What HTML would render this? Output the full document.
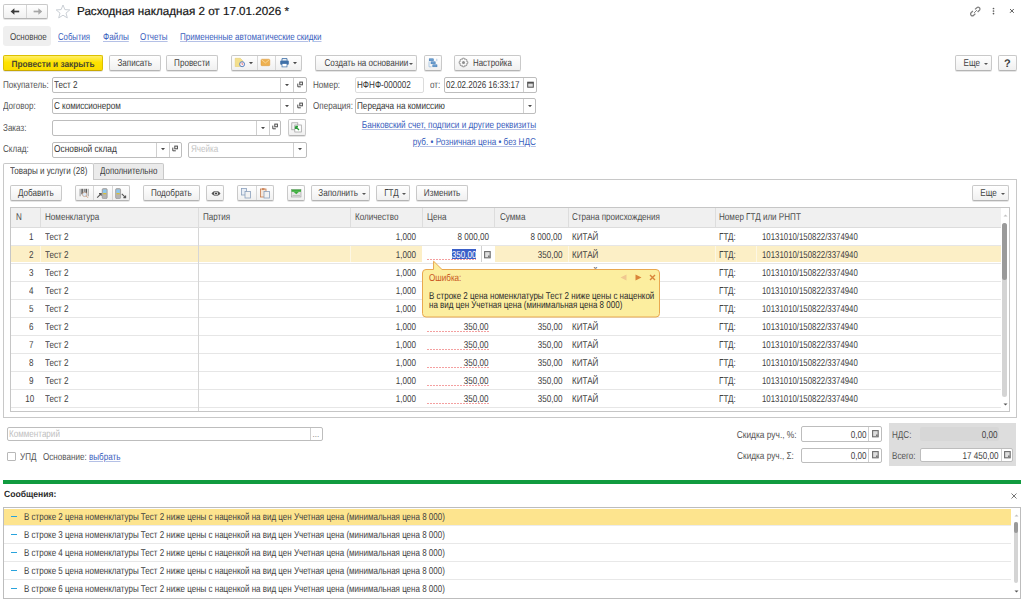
<!DOCTYPE html><html><head><meta charset="utf-8"><style>
html,body{margin:0;padding:0;width:1024px;height:603px;overflow:hidden;background:#fff;font-family:"Liberation Sans",sans-serif;text-rendering:geometricPrecision}
div{box-sizing:border-box}
.lnk{color:#3d5fae;text-decoration:underline;text-decoration-color:#8fa3d4}
</style></head><body>
<div style="position:absolute;left:3px;top:4px;width:45px;height:15px;background:linear-gradient(#ffffff,#f0f0f0);border:1px solid #c9c9c9;border-bottom-color:#b4b4b4;border-radius:2px;box-shadow:0 1px 0 rgba(0,0,0,0.10);box-sizing:border-box;"></div>
<div style="position:absolute;left:26px;top:5px;width:1px;height:13px;background:#d4d4d4"></div>
<svg style="position:absolute;left:10px;top:7px" width="10" height="9" viewBox="0 0 10 9"><path d="M2.5 4.5H9.2" stroke="#3a3a3a" stroke-width="1.7"/><path d="M0.6 4.5L4.4 1.2V7.8Z" fill="#3a3a3a"/></svg>
<svg style="position:absolute;left:32.5px;top:7px" width="10" height="9" viewBox="0 0 10 9"><path d="M0.6 4.5H7.3" stroke="#a6a6a6" stroke-width="1.7"/><path d="M9.2 4.5L5.4 1.2V7.8Z" fill="#a6a6a6"/></svg>
<svg style="position:absolute;left:55px;top:4px" width="16" height="15" viewBox="0 0 16 15"><path d="M8 1L9.9 5.6L14.8 5.9L11 9.1L12.3 13.9L8 11.2L3.7 13.9L5 9.1L1.2 5.9L6.1 5.6Z" fill="none" stroke="#c4c9d0" stroke-width="0.9"/></svg>
<div style="position:absolute;left:77px;top:5.26px;font-size:11.65px;line-height:14px;color:#151515;white-space:pre;-webkit-text-stroke:0.2px #151515">Расходная накладная 2 от 17.01.2026 *</div>
<svg style="position:absolute;left:969.5px;top:5.5px" width="11" height="11" viewBox="0 0 11 11"><g fill="none" stroke="#808080" stroke-width="1.25"><path d="M5 3.4L6.8 1.7a1.8 1.8 0 0 1 2.6 2.6L7.6 6"/><path d="M5.4 7.6L3.7 9.3a1.8 1.8 0 0 1 -2.6 -2.6L2.9 5"/><path d="M4.1 6.9L6.9 4.1" stroke-width="1"/></g></svg>
<svg style="position:absolute;left:991.5px;top:6.5px" width="3" height="8" viewBox="0 0 3 8"><g fill="#5a5a5a"><circle cx="1.5" cy="1.5" r="0.85"/><circle cx="1.5" cy="4" r="0.85"/><circle cx="1.5" cy="6.6" r="0.85"/></g></svg>
<svg style="position:absolute;left:1009px;top:8px" width="6" height="6" viewBox="0 0 6 6"><path d="M1 1L4.8 4.8M4.8 1L1 4.8" stroke="#5a5a5a" stroke-width="1"/></svg>
<div style="position:absolute;left:3px;top:25.5px;width:48px;height:20.5px;background:#efefef;border-radius:3px"></div>
<div style="position:absolute;left:9.5px;top:31.74px;font-size:10px;line-height:12px;color:#444;white-space:pre;transform:scaleX(0.8031920335572758);transform-origin:left center;">Основное</div>
<div style="position:absolute;left:58.3px;top:31.74px;font-size:10px;line-height:12px;color:#3a60bd;white-space:pre;transform:scaleX(0.7751996669063931);transform-origin:left center;text-decoration:underline;text-decoration-color:#b4c0e6;text-underline-offset:0.5px">События</div>
<div style="position:absolute;left:102.8px;top:31.74px;font-size:10px;line-height:12px;color:#3a60bd;white-space:pre;transform:scaleX(0.8120389495426379);transform-origin:left center;text-decoration:underline;text-decoration-color:#b4c0e6;text-underline-offset:0.5px">Файлы</div>
<div style="position:absolute;left:140.4px;top:31.74px;font-size:10px;line-height:12px;color:#3a60bd;white-space:pre;transform:scaleX(0.7985172460557842);transform-origin:left center;text-decoration:underline;text-decoration-color:#b4c0e6;text-underline-offset:0.5px">Отчеты</div>
<div style="position:absolute;left:179.5px;top:31.74px;font-size:10px;line-height:12px;color:#3a60bd;white-space:pre;transform:scaleX(0.8025522864232542);transform-origin:left center;text-decoration:underline;text-decoration-color:#b4c0e6;text-underline-offset:0.5px">Примененные автоматические скидки</div>
<div style="position:absolute;left:3px;top:55px;width:100px;height:16px;background:linear-gradient(#ffee6a,#ffe300 45%,#fadc00);border:1px solid #dcc000;border-bottom-color:#c9a800;border-radius:2px;box-shadow:0 1px 0 rgba(0,0,0,0.10)"></div>
<div style="position:absolute;left:3px;width:100px;top:58.18px;font-size:9px;line-height:12px;color:#4a4830;text-align:center;white-space:pre;transform:scaleX(0.92);font-weight:bold;">Провести и закрыть</div>
<div style="position:absolute;left:109px;top:55px;width:51.5px;height:16px;background:linear-gradient(#ffffff,#f0f0f0);border:1px solid #c9c9c9;border-bottom-color:#b4b4b4;border-radius:2px;box-shadow:0 1px 0 rgba(0,0,0,0.10);box-sizing:border-box;"></div>
<div style="position:absolute;left:109px;width:51.5px;top:58.14px;font-size:10px;line-height:12px;color:#424242;text-align:center;white-space:pre;transform:scaleX(0.808);">Записать</div>
<div style="position:absolute;left:166px;top:55px;width:52px;height:16px;background:linear-gradient(#ffffff,#f0f0f0);border:1px solid #c9c9c9;border-bottom-color:#b4b4b4;border-radius:2px;box-shadow:0 1px 0 rgba(0,0,0,0.10);box-sizing:border-box;"></div>
<div style="position:absolute;left:166px;width:52px;top:58.14px;font-size:10px;line-height:12px;color:#424242;text-align:center;white-space:pre;transform:scaleX(0.808);">Провести</div>
<div style="position:absolute;left:231px;top:55px;width:70.5px;height:16px;background:linear-gradient(#ffffff,#f0f0f0);border:1px solid #c9c9c9;border-bottom-color:#b4b4b4;border-radius:2px;box-shadow:0 1px 0 rgba(0,0,0,0.10);box-sizing:border-box;"></div>
<div style="position:absolute;left:257px;top:56px;width:1px;height:14px;background:#d6d6d6"></div>
<div style="position:absolute;left:275px;top:56px;width:1px;height:14px;background:#d6d6d6"></div>
<svg style="position:absolute;left:234px;top:57px" width="12" height="11" viewBox="0 0 12 11"><path d="M1.2 1.3H6.3L8.8 3.8V9.5H1.2Z" fill="#f3df8c" stroke="#e2c86a" stroke-width="0.5"/><circle cx="8.1" cy="7.2" r="2.5" fill="#f8eef2" stroke="#4c7cc0" stroke-width="0.9"/><path d="M8.1 5.6V7.3H9.2" stroke="#d44" stroke-width="0.6" fill="none"/></svg>
<svg style="position:absolute;left:248.6px;top:62.4px" width="4" height="2.2" viewBox="0 0 4 2.2"><path d="M0 0H4L2.0 2.2Z" fill="#4a4a4a"/></svg>
<svg style="position:absolute;left:260px;top:58px" width="11" height="9" viewBox="0 0 11 9"><rect x="1" y="1.2" width="8.8" height="6.5" rx="0.8" fill="#eeb04e" stroke="#d9973a" stroke-width="0.5"/><path d="M1.3 1.6L5.4 4.9L9.5 1.6" stroke="#fbe2b0" stroke-width="0.7" fill="none"/></svg>
<svg style="position:absolute;left:279px;top:57px" width="11" height="11" viewBox="0 0 11 11"><path d="M3 3.6V1.6H8V3.6" fill="none" stroke="#3f70a8" stroke-width="0.9"/><rect x="1.2" y="3.6" width="8.6" height="4.2" rx="1" fill="#3f70a8"/><rect x="3" y="6.6" width="5" height="3.3" fill="#fff" stroke="#3f70a8" stroke-width="0.7"/></svg>
<svg style="position:absolute;left:293.2px;top:62.4px" width="4" height="2.2" viewBox="0 0 4 2.2"><path d="M0 0H4L2.0 2.2Z" fill="#4a4a4a"/></svg>
<div style="position:absolute;left:314.5px;top:55px;width:102.5px;height:16px;background:linear-gradient(#ffffff,#f0f0f0);border:1px solid #c9c9c9;border-bottom-color:#b4b4b4;border-radius:2px;box-shadow:0 1px 0 rgba(0,0,0,0.10);box-sizing:border-box;"></div>
<div style="position:absolute;left:314.5px;width:98.5px;top:58.14px;font-size:10px;line-height:12px;color:#424242;text-align:center;white-space:pre;transform:scaleX(0.808);">Создать на основании</div>
<svg style="position:absolute;left:409.0px;top:62.6px" width="4" height="2" viewBox="0 0 4 2"><path d="M0 0H4L2.0 2Z" fill="#555"/></svg>
<div style="position:absolute;left:423.5px;top:55px;width:18.0px;height:16px;background:linear-gradient(#ffffff,#f0f0f0);border:1px solid #c9c9c9;border-bottom-color:#b4b4b4;border-radius:2px;box-shadow:0 1px 0 rgba(0,0,0,0.10);box-sizing:border-box;"></div>
<svg style="position:absolute;left:427.5px;top:57.5px" width="10" height="10" viewBox="0 0 10 10"><g fill="#6a9fd0" stroke="#3f78b4" stroke-width="0.5"><rect x="1.2" y="0.8" width="4.2" height="2"/><rect x="3" y="3.8" width="4.2" height="2"/><rect x="4.8" y="6.8" width="4.2" height="2"/></g><path d="M1 3.5V8.8H3.5M8.8 0.8V3.2" stroke="#9dbfe0" stroke-width="0.8" fill="none"/></svg>
<div style="position:absolute;left:454px;top:55px;width:66.5px;height:16px;background:linear-gradient(#ffffff,#f0f0f0);border:1px solid #c9c9c9;border-bottom-color:#b4b4b4;border-radius:2px;box-shadow:0 1px 0 rgba(0,0,0,0.10);box-sizing:border-box;"></div>
<svg style="position:absolute;left:458.2px;top:56.7px" width="11" height="11" viewBox="0 0 11 11"><path d="M8.60 4.38 L9.82 4.68 L9.82 6.32 L8.60 6.62 L8.49 6.91 L9.14 7.97 L7.97 9.14 L6.91 8.49 L6.62 8.60 L6.32 9.82 L4.68 9.82 L4.38 8.60 L4.09 8.49 L3.03 9.14 L1.86 7.97 L2.51 6.91 L2.40 6.62 L1.18 6.32 L1.18 4.68 L2.40 4.38 L2.51 4.09 L1.86 3.03 L3.03 1.86 L4.09 2.51 L4.38 2.40 L4.68 1.18 L6.32 1.18 L6.62 2.40 L6.91 2.51 L7.97 1.86 L9.14 3.03 L8.49 4.09Z" fill="none" stroke="#8c8c8c" stroke-width="0.9"/><circle cx="5.5" cy="5.5" r="1.5" fill="#8c8c8c"/></svg>
<div style="position:absolute;left:473px;top:57.84px;font-size:10px;line-height:12px;color:#404040;white-space:pre;transform:scaleX(0.7881923504205681);transform-origin:left center;">Настройка</div>
<div style="position:absolute;left:954.5px;top:55px;width:37.5px;height:16px;background:linear-gradient(#ffffff,#f0f0f0);border:1px solid #c9c9c9;border-bottom-color:#b4b4b4;border-radius:2px;box-shadow:0 1px 0 rgba(0,0,0,0.10);box-sizing:border-box;"></div>
<div style="position:absolute;left:954.5px;width:33.5px;top:58.14px;font-size:10px;line-height:12px;color:#424242;text-align:center;white-space:pre;transform:scaleX(0.808);">Еще</div>
<svg style="position:absolute;left:984.0px;top:62.6px" width="4" height="2" viewBox="0 0 4 2"><path d="M0 0H4L2.0 2Z" fill="#555"/></svg>
<div style="position:absolute;left:998px;top:55px;width:18.5px;height:16px;background:linear-gradient(#ffffff,#f0f0f0);border:1px solid #c9c9c9;border-bottom-color:#b4b4b4;border-radius:2px;box-shadow:0 1px 0 rgba(0,0,0,0.10);box-sizing:border-box;"></div>
<div style="position:absolute;left:998px;width:18.5px;top:57.99px;font-size:11px;line-height:12px;color:#3a3a3a;text-align:center;white-space:pre;transform:scaleX(1);font-weight:bold;">?</div>
<div style="position:absolute;left:3px;top:79.73px;font-size:10px;line-height:12px;color:#545454;white-space:pre;transform:scaleX(0.808);transform-origin:left center;">Покупатель:</div>
<div style="position:absolute;left:51.5px;top:77px;width:255.0px;height:16px;background:#fff;border:1px solid #bdbdbd;border-radius:2px;"></div>
<div style="position:absolute;left:280.3px;top:78px;width:1.0px;height:14px;background:#cfcfcf"></div>
<div style="position:absolute;left:293.4px;top:78px;width:1.0px;height:14px;background:#cfcfcf"></div>
<svg style="position:absolute;left:285.35px;top:83.9px" width="4" height="2.2" viewBox="0 0 4 2.2"><path d="M0 0H4L2.0 2.2Z" fill="#4a4a4a"/></svg>
<svg style="position:absolute;left:297.0px;top:80.5px" width="8" height="8" viewBox="0 0 8 8"><rect x="2.8" y="1.1" width="2.6" height="2.7" fill="none" stroke="#4a4a4a" stroke-width="1"/><path d="M0.8 2.6V5.8H3.8" fill="none" stroke="#4a4a4a" stroke-width="1"/></svg>
<div style="position:absolute;left:54px;top:79.73px;font-size:10px;line-height:12px;color:#363636;white-space:pre;transform:scaleX(0.808);transform-origin:left center;">Тест 2</div>
<div style="position:absolute;left:313px;top:79.73px;font-size:10px;line-height:12px;color:#545454;white-space:pre;transform:scaleX(0.808);transform-origin:left center;">Номер:</div>
<div style="position:absolute;left:355px;top:77px;width:68.5px;height:16px;background:#fff;border:1px solid #dcdcdc;border-radius:2px;"></div>
<div style="position:absolute;left:357.3px;top:79.73px;font-size:10px;line-height:12px;color:#363636;white-space:pre;transform:scaleX(0.8109088339888367);transform-origin:left center;">НФНФ-000002</div>
<div style="position:absolute;left:430.4px;top:79.73px;font-size:10px;line-height:12px;color:#545454;white-space:pre;transform:scaleX(0.808);transform-origin:left center;">от:</div>
<div style="position:absolute;left:443.5px;top:77px;width:93.0px;height:16px;background:#fff;border:1px solid #bdbdbd;border-radius:2px;"></div>
<div style="position:absolute;left:523.4px;top:78px;width:1.0px;height:14px;background:#cfcfcf"></div>
<div style="position:absolute;left:445.6px;top:79.73px;font-size:10px;line-height:12px;color:#363636;white-space:pre;transform:scaleX(0.8011444921316165);transform-origin:left center;">02.02.2026 16:33:17</div>
<svg style="position:absolute;left:526.5px;top:80.5px" width="7" height="7" viewBox="0 0 7 7"><rect x="0.7" y="1.2" width="5.6" height="5" fill="#ddd" stroke="#505050" stroke-width="1"/><rect x="0.7" y="1" width="5.6" height="1.6" fill="#505050"/></svg>
<div style="position:absolute;left:3px;top:100.94px;font-size:10px;line-height:12px;color:#545454;white-space:pre;transform:scaleX(0.808);transform-origin:left center;">Договор:</div>
<div style="position:absolute;left:51.5px;top:98px;width:255.0px;height:16px;background:#fff;border:1px solid #bdbdbd;border-radius:2px;"></div>
<div style="position:absolute;left:280.3px;top:99px;width:1.0px;height:14px;background:#cfcfcf"></div>
<div style="position:absolute;left:293.4px;top:99px;width:1.0px;height:14px;background:#cfcfcf"></div>
<svg style="position:absolute;left:285.35px;top:104.9px" width="4" height="2.2" viewBox="0 0 4 2.2"><path d="M0 0H4L2.0 2.2Z" fill="#4a4a4a"/></svg>
<svg style="position:absolute;left:297.0px;top:101.5px" width="8" height="8" viewBox="0 0 8 8"><rect x="2.8" y="1.1" width="2.6" height="2.7" fill="none" stroke="#4a4a4a" stroke-width="1"/><path d="M0.8 2.6V5.8H3.8" fill="none" stroke="#4a4a4a" stroke-width="1"/></svg>
<div style="position:absolute;left:53.5px;top:100.94px;font-size:10px;line-height:12px;color:#363636;white-space:pre;transform:scaleX(0.8073879624558553);transform-origin:left center;">С комиссионером</div>
<div style="position:absolute;left:313px;top:100.94px;font-size:10px;line-height:12px;color:#545454;white-space:pre;transform:scaleX(0.808);transform-origin:left center;">Операция:</div>
<div style="position:absolute;left:355.4px;top:98px;width:181.10000000000002px;height:16px;background:#fff;border:1px solid #bdbdbd;border-radius:2px;"></div>
<div style="position:absolute;left:523.4px;top:99px;width:1.0px;height:14px;background:#cfcfcf"></div>
<svg style="position:absolute;left:528.45px;top:104.9px" width="4" height="2.2" viewBox="0 0 4 2.2"><path d="M0 0H4L2.0 2.2Z" fill="#4a4a4a"/></svg>
<div style="position:absolute;left:357.3px;top:100.94px;font-size:10px;line-height:12px;color:#363636;white-space:pre;transform:scaleX(0.8142470041007954);transform-origin:left center;">Передача на комиссию</div>
<div style="position:absolute;left:3px;top:122.63px;font-size:10px;line-height:12px;color:#545454;white-space:pre;transform:scaleX(0.808);transform-origin:left center;">Заказ:</div>
<div style="position:absolute;left:51.5px;top:120px;width:229.7px;height:16px;background:#fff;border:1px solid #bdbdbd;border-radius:2px;"></div>
<div style="position:absolute;left:255.6px;top:121px;width:1.0000000000000284px;height:14px;background:#cfcfcf"></div>
<div style="position:absolute;left:268.8px;top:121px;width:1.0px;height:14px;background:#cfcfcf"></div>
<svg style="position:absolute;left:260.7px;top:126.7px" width="4" height="2.2" viewBox="0 0 4 2.2"><path d="M0 0H4L2.0 2.2Z" fill="#4a4a4a"/></svg>
<svg style="position:absolute;left:272.05px;top:123.3px" width="8" height="8" viewBox="0 0 8 8"><rect x="2.8" y="1.1" width="2.6" height="2.7" fill="none" stroke="#4a4a4a" stroke-width="1"/><path d="M0.8 2.6V5.8H3.8" fill="none" stroke="#4a4a4a" stroke-width="1"/></svg>
<div style="position:absolute;left:288.2px;top:119px;width:18.30000000000001px;height:17px;background:linear-gradient(#ffffff,#f0f0f0);border:1px solid #c9c9c9;border-bottom-color:#b4b4b4;border-radius:2px;box-shadow:0 1px 0 rgba(0,0,0,0.10);box-sizing:border-box;"></div>
<svg style="position:absolute;left:291px;top:122px" width="12" height="11" viewBox="0 0 12 11"><rect x="0.8" y="0.8" width="6" height="7" fill="#f4f4f4" stroke="#9a9a9a" stroke-width="0.7"/><rect x="3.8" y="3" width="6.5" height="7" fill="#fff" stroke="#9a9a9a" stroke-width="0.7"/><path d="M4.5 4.5L8 8M4.5 4.5V7M4.5 4.5H7" stroke="#2c9a3a" stroke-width="1.3" fill="none"/></svg>
<div style="position:absolute;right:487.5px;top:119.94px;font-size:10px;line-height:12px;color:#3a60bd;white-space:pre;transform:scaleX(0.821854831579878);transform-origin:right center;text-decoration:underline;text-decoration-color:#b4c0e6;text-underline-offset:0.5px">Банковский счет, подписи и другие реквизиты</div>
<div style="position:absolute;right:488.20000000000005px;top:136.73px;font-size:10px;line-height:12px;color:#3a60bd;white-space:pre;transform:scaleX(0.8161269604491682);transform-origin:right center;text-decoration:underline;text-decoration-color:#b4c0e6;text-underline-offset:0.5px">руб. • Розничная цена • без НДС</div>
<div style="position:absolute;left:3px;top:144.13px;font-size:10px;line-height:12px;color:#545454;white-space:pre;transform:scaleX(0.808);transform-origin:left center;">Склад:</div>
<div style="position:absolute;left:51.5px;top:142px;width:130.5px;height:16px;background:#fff;border:1px solid #bdbdbd;border-radius:2px;"></div>
<div style="position:absolute;left:155.5px;top:143px;width:1.0px;height:14px;background:#cfcfcf"></div>
<div style="position:absolute;left:168.6px;top:143px;width:1.0px;height:14px;background:#cfcfcf"></div>
<svg style="position:absolute;left:160.55px;top:148.4px" width="4" height="2.2" viewBox="0 0 4 2.2"><path d="M0 0H4L2.0 2.2Z" fill="#4a4a4a"/></svg>
<svg style="position:absolute;left:172.35000000000002px;top:145.0px" width="8" height="8" viewBox="0 0 8 8"><rect x="2.8" y="1.1" width="2.6" height="2.7" fill="none" stroke="#4a4a4a" stroke-width="1"/><path d="M0.8 2.6V5.8H3.8" fill="none" stroke="#4a4a4a" stroke-width="1"/></svg>
<div style="position:absolute;left:53.5px;top:144.13px;font-size:10px;line-height:12px;color:#363636;white-space:pre;transform:scaleX(0.8335822133731541);transform-origin:left center;">Основной склад</div>
<div style="position:absolute;left:188px;top:142px;width:118.5px;height:16px;background:#fff;border:1px solid #bdbdbd;border-radius:2px;"></div>
<div style="position:absolute;left:293.4px;top:143px;width:1.0px;height:14px;background:#cfcfcf"></div>
<svg style="position:absolute;left:298.45px;top:148.4px" width="4" height="2.2" viewBox="0 0 4 2.2"><path d="M0 0H4L2.0 2.2Z" fill="#4a4a4a"/></svg>
<div style="position:absolute;left:191px;top:144.13px;font-size:10px;line-height:12px;color:#c4c4c4;white-space:pre;transform:scaleX(0.808);transform-origin:left center;">Ячейка</div>
<div style="position:absolute;left:3px;top:179px;width:1014px;height:239px;border:1px solid #c8c8c8;border-top:none"></div>
<div style="position:absolute;left:163.5px;top:179px;width:853.5px;height:1px;background:#c8c8c8"></div>
<div style="position:absolute;left:3px;top:163px;width:91px;height:17px;background:#fff;border:1px solid #c8c8c8;border-bottom:none;border-radius:2px 2px 0 0"></div>
<div style="position:absolute;left:10.2px;top:166.13px;font-size:10px;line-height:12px;color:#404040;white-space:pre;transform:scaleX(0.8047629892312197);transform-origin:left center;">Товары и услуги (28)</div>
<div style="position:absolute;left:93.5px;top:163px;width:70.0px;height:17px;background:#ebebeb;border:1px solid #c8c8c8;border-left:none;border-radius:0 2px 0 0"></div>
<div style="position:absolute;left:99.8px;top:166.13px;font-size:10px;line-height:12px;color:#404040;white-space:pre;transform:scaleX(0.7961961831563864);transform-origin:left center;">Дополнительно</div>
<div style="position:absolute;left:10.2px;top:185.2px;width:51.8px;height:16.30000000000001px;background:linear-gradient(#ffffff,#f0f0f0);border:1px solid #c9c9c9;border-bottom-color:#b4b4b4;border-radius:2px;box-shadow:0 1px 0 rgba(0,0,0,0.10);box-sizing:border-box;"></div>
<div style="position:absolute;left:10.2px;width:51.8px;top:188.33px;font-size:10px;line-height:12px;color:#424242;text-align:center;white-space:pre;transform:scaleX(0.808);">Добавить</div>
<div style="position:absolute;left:74.7px;top:185.2px;width:55.7px;height:16.30000000000001px;background:linear-gradient(#ffffff,#f0f0f0);border:1px solid #c9c9c9;border-bottom-color:#b4b4b4;border-radius:2px;box-shadow:0 1px 0 rgba(0,0,0,0.10);box-sizing:border-box;"></div>
<div style="position:absolute;left:93.4px;top:186.2px;width:1.0px;height:14.300000000000011px;background:#d6d6d6"></div>
<div style="position:absolute;left:112.3px;top:186.2px;width:1.0px;height:14.300000000000011px;background:#d6d6d6"></div>
<svg style="position:absolute;left:78.5px;top:188px" width="11" height="11" viewBox="0 0 11 11"><g fill="#4a4a4a"><rect x="0.6" y="0.8" width="1" height="7.5" fill="#999"/><rect x="2.4" y="0.8" width="1.4" height="5.5"/><rect x="4.7" y="0.8" width="0.9" height="4"/><rect x="6.5" y="0.8" width="1.4" height="4.5"/><rect x="8.7" y="0.8" width="1" height="7.5" fill="#999"/></g><circle cx="5.6" cy="6.4" r="2.2" fill="#dceaf8" stroke="#c09a80" stroke-width="0.7"/><path d="M7.1 7.9L9 9.8" stroke="#d0a080" stroke-width="1"/></svg>
<svg style="position:absolute;left:96px;top:187.5px" width="13" height="11" viewBox="0 0 13 11"><rect x="6.2" y="0.6" width="5" height="10" rx="1.2" fill="#b4b4b4" stroke="#8a8a8a" stroke-width="0.6"/><rect x="7" y="1.6" width="3.4" height="3.3" fill="#8cc8f0"/><rect x="7.2" y="5.3" width="3" height="0.9" fill="#e8c400"/><path d="M1.2 9.6L5.2 5.6M3 5.6H5.2V7.8" stroke="#555" stroke-width="1.1" fill="none"/></svg>
<svg style="position:absolute;left:115px;top:187.5px" width="13" height="11" viewBox="0 0 13 11"><rect x="0.6" y="0.6" width="5" height="10" rx="1.2" fill="#b4b4b4" stroke="#8a8a8a" stroke-width="0.6"/><rect x="1.4" y="1.6" width="3.4" height="3.3" fill="#8cc8f0"/><rect x="1.6" y="5.3" width="3" height="0.9" fill="#e8c400"/><path d="M6.8 5.8L10.6 9.6M10.6 7.4V9.6H8.4" stroke="#555" stroke-width="1.1" fill="none"/></svg>
<div style="position:absolute;left:143.3px;top:185.2px;width:56.69999999999999px;height:16.30000000000001px;background:linear-gradient(#ffffff,#f0f0f0);border:1px solid #c9c9c9;border-bottom-color:#b4b4b4;border-radius:2px;box-shadow:0 1px 0 rgba(0,0,0,0.10);box-sizing:border-box;"></div>
<div style="position:absolute;left:143.3px;width:56.69999999999999px;top:188.33px;font-size:10px;line-height:12px;color:#424242;text-align:center;white-space:pre;transform:scaleX(0.808);">Подобрать</div>
<div style="position:absolute;left:206.2px;top:185.2px;width:18.100000000000023px;height:16.30000000000001px;background:linear-gradient(#ffffff,#f0f0f0);border:1px solid #c9c9c9;border-bottom-color:#b4b4b4;border-radius:2px;box-shadow:0 1px 0 rgba(0,0,0,0.10);box-sizing:border-box;"></div>
<svg style="position:absolute;left:210.5px;top:188.5px" width="10" height="9" viewBox="0 0 10 9"><path d="M0.5 4.5C2.5 1.2 7.5 1.2 9.5 4.5C7.5 7.8 2.5 7.8 0.5 4.5Z" fill="#555"/><circle cx="5" cy="4.5" r="2" fill="#e8e8e8"/><circle cx="5" cy="4.5" r="1.1" fill="#444"/></svg>
<div style="position:absolute;left:237.4px;top:185.2px;width:36.599999999999994px;height:16.30000000000001px;background:linear-gradient(#ffffff,#f0f0f0);border:1px solid #c9c9c9;border-bottom-color:#b4b4b4;border-radius:2px;box-shadow:0 1px 0 rgba(0,0,0,0.10);box-sizing:border-box;"></div>
<div style="position:absolute;left:255.6px;top:186.2px;width:1.0000000000000284px;height:14.300000000000011px;background:#d6d6d6"></div>
<svg style="position:absolute;left:240.5px;top:187.5px" width="11" height="11" viewBox="0 0 11 11"><rect x="0.5" y="0.5" width="5" height="6.5" fill="#e8eef6" stroke="#8aa0bc" stroke-width="0.8"/><rect x="4" y="3.5" width="5.5" height="6.5" fill="#f2f2f2" stroke="#8aa0bc" stroke-width="0.8"/></svg>
<svg style="position:absolute;left:259.5px;top:187.5px" width="11" height="11" viewBox="0 0 11 11"><rect x="0.5" y="1" width="5.5" height="8" fill="#f4e6da" stroke="#c87a4a" stroke-width="0.8"/><rect x="2" y="0.3" width="2.5" height="1.5" fill="#c87a4a"/><rect x="4" y="3.5" width="5.5" height="6.5" fill="#f2f2f2" stroke="#8aa0bc" stroke-width="0.8"/></svg>
<div style="position:absolute;left:286.6px;top:185.2px;width:18.19999999999999px;height:16.30000000000001px;background:linear-gradient(#ffffff,#f0f0f0);border:1px solid #c9c9c9;border-bottom-color:#b4b4b4;border-radius:2px;box-shadow:0 1px 0 rgba(0,0,0,0.10);box-sizing:border-box;"></div>
<svg style="position:absolute;left:290.5px;top:188.5px" width="11" height="9" viewBox="0 0 11 9"><rect x="0.5" y="0.5" width="9.5" height="7.5" fill="#e4e4e4" stroke="#9a9a9a" stroke-width="0.6"/><rect x="0.5" y="0.5" width="9.5" height="2.3" fill="#3eae3e"/><path d="M2.5 2.8L5.25 5.2L8 2.8Z" fill="#3eae3e"/><path d="M1.5 6.5H9" stroke="#aaa" stroke-width="0.6"/></svg>
<div style="position:absolute;left:311.3px;top:185.2px;width:58.39999999999998px;height:16.30000000000001px;background:linear-gradient(#ffffff,#f0f0f0);border:1px solid #c9c9c9;border-bottom-color:#b4b4b4;border-radius:2px;box-shadow:0 1px 0 rgba(0,0,0,0.10);box-sizing:border-box;"></div>
<div style="position:absolute;left:311.3px;width:54.39999999999998px;top:188.33px;font-size:10px;line-height:12px;color:#424242;text-align:center;white-space:pre;transform:scaleX(0.808);">Заполнить</div>
<svg style="position:absolute;left:361.7px;top:192.79999999999998px" width="4" height="2" viewBox="0 0 4 2"><path d="M0 0H4L2.0 2Z" fill="#555"/></svg>
<div style="position:absolute;left:375.6px;top:185.2px;width:34.799999999999955px;height:16.30000000000001px;background:linear-gradient(#ffffff,#f0f0f0);border:1px solid #c9c9c9;border-bottom-color:#b4b4b4;border-radius:2px;box-shadow:0 1px 0 rgba(0,0,0,0.10);box-sizing:border-box;"></div>
<div style="position:absolute;left:375.6px;width:30.799999999999955px;top:188.33px;font-size:10px;line-height:12px;color:#424242;text-align:center;white-space:pre;transform:scaleX(0.808);">ГТД</div>
<svg style="position:absolute;left:402.4px;top:192.79999999999998px" width="4" height="2" viewBox="0 0 4 2"><path d="M0 0H4L2.0 2Z" fill="#555"/></svg>
<div style="position:absolute;left:416.2px;top:185.2px;width:52.19999999999999px;height:16.30000000000001px;background:linear-gradient(#ffffff,#f0f0f0);border:1px solid #c9c9c9;border-bottom-color:#b4b4b4;border-radius:2px;box-shadow:0 1px 0 rgba(0,0,0,0.10);box-sizing:border-box;"></div>
<div style="position:absolute;left:416.2px;width:52.19999999999999px;top:188.33px;font-size:10px;line-height:12px;color:#424242;text-align:center;white-space:pre;transform:scaleX(0.808);">Изменить</div>
<div style="position:absolute;left:972.2px;top:185.2px;width:37.09999999999991px;height:16.30000000000001px;background:linear-gradient(#ffffff,#f0f0f0);border:1px solid #c9c9c9;border-bottom-color:#b4b4b4;border-radius:2px;box-shadow:0 1px 0 rgba(0,0,0,0.10);box-sizing:border-box;"></div>
<div style="position:absolute;left:972.2px;width:33.09999999999991px;top:188.33px;font-size:10px;line-height:12px;color:#424242;text-align:center;white-space:pre;transform:scaleX(0.808);">Еще</div>
<svg style="position:absolute;left:1001.3px;top:192.79999999999998px" width="4" height="2" viewBox="0 0 4 2"><path d="M0 0H4L2.0 2Z" fill="#555"/></svg>
<div style="position:absolute;left:10px;top:207px;width:1000px;height:205px;border:1px solid #c6c6c6;background:#fff"></div>
<div style="position:absolute;left:11px;top:208px;width:990px;height:20px;background:#f0f0f0;border-bottom:1px solid #dcdcdc"></div>
<div style="position:absolute;left:39.5px;top:208px;width:1.0px;height:19px;background:#dddddd"></div>
<div style="position:absolute;left:197.8px;top:208px;width:1.0px;height:19px;background:#dddddd"></div>
<div style="position:absolute;left:349.5px;top:208px;width:1.0px;height:19px;background:#dddddd"></div>
<div style="position:absolute;left:421.6px;top:208px;width:1.0px;height:19px;background:#dddddd"></div>
<div style="position:absolute;left:494.3px;top:208px;width:1.0px;height:19px;background:#dddddd"></div>
<div style="position:absolute;left:567.6px;top:208px;width:1.0px;height:19px;background:#dddddd"></div>
<div style="position:absolute;left:714.6px;top:208px;width:1.0px;height:19px;background:#dddddd"></div>
<div style="position:absolute;left:15.7px;top:212.03px;font-size:10px;line-height:12px;color:#4d4d4d;white-space:pre;transform:scaleX(0.808);transform-origin:left center;">N</div>
<div style="position:absolute;left:44.7px;top:212.03px;font-size:10px;line-height:12px;color:#4d4d4d;white-space:pre;transform:scaleX(0.808);transform-origin:left center;">Номенклатура</div>
<div style="position:absolute;left:202.7px;top:212.03px;font-size:10px;line-height:12px;color:#4d4d4d;white-space:pre;transform:scaleX(0.808);transform-origin:left center;">Партия</div>
<div style="position:absolute;left:354.5px;top:212.03px;font-size:10px;line-height:12px;color:#4d4d4d;white-space:pre;transform:scaleX(0.808);transform-origin:left center;">Количество</div>
<div style="position:absolute;left:427.4px;top:212.03px;font-size:10px;line-height:12px;color:#4d4d4d;white-space:pre;transform:scaleX(0.808);transform-origin:left center;">Цена</div>
<div style="position:absolute;left:499.5px;top:212.03px;font-size:10px;line-height:12px;color:#4d4d4d;white-space:pre;transform:scaleX(0.808);transform-origin:left center;">Сумма</div>
<div style="position:absolute;left:572.3px;top:212.03px;font-size:10px;line-height:12px;color:#4d4d4d;white-space:pre;transform:scaleX(0.808);transform-origin:left center;">Страна происхождения</div>
<div style="position:absolute;left:719.3px;top:212.03px;font-size:10px;line-height:12px;color:#4d4d4d;white-space:pre;transform:scaleX(0.808);transform-origin:left center;">Номер ГТД или РНПТ</div>
<div style="position:absolute;left:11px;top:245px;width:990px;height:1px;background:#e6e6e6"></div>
<div style="position:absolute;left:11px;top:246px;width:990px;height:16px;background:#fcefc6"></div>
<div style="position:absolute;left:39.5px;top:246px;width:1.0px;height:16px;background:#fdf7e4"></div>
<div style="position:absolute;left:197.8px;top:246px;width:1.0px;height:16px;background:#fdf7e4"></div>
<div style="position:absolute;left:349.5px;top:246px;width:1.0px;height:16px;background:#fdf7e4"></div>
<div style="position:absolute;left:421.6px;top:246px;width:1.0px;height:16px;background:#fdf7e4"></div>
<div style="position:absolute;left:494.3px;top:246px;width:1.0px;height:16px;background:#fdf7e4"></div>
<div style="position:absolute;left:567.6px;top:246px;width:1.0px;height:16px;background:#fdf7e4"></div>
<div style="position:absolute;left:714.6px;top:246px;width:1.0px;height:16px;background:#fdf7e4"></div>
<div style="position:absolute;left:755.5px;top:246px;width:1.0px;height:16px;background:#fdf7e4"></div>
<div style="position:absolute;left:11px;top:263px;width:990px;height:1px;background:#e6e6e6"></div>
<div style="position:absolute;left:11px;top:281px;width:990px;height:1px;background:#e6e6e6"></div>
<div style="position:absolute;left:11px;top:299px;width:990px;height:1px;background:#e6e6e6"></div>
<div style="position:absolute;left:11px;top:317px;width:990px;height:1px;background:#e6e6e6"></div>
<div style="position:absolute;left:11px;top:335px;width:990px;height:1px;background:#e6e6e6"></div>
<div style="position:absolute;left:11px;top:353px;width:990px;height:1px;background:#e6e6e6"></div>
<div style="position:absolute;left:11px;top:371px;width:990px;height:1px;background:#e6e6e6"></div>
<div style="position:absolute;left:11px;top:389px;width:990px;height:1px;background:#e6e6e6"></div>
<div style="position:absolute;left:11px;top:407px;width:990px;height:1px;background:#e6e6e6"></div>
<div style="position:absolute;left:197.8px;top:228px;width:1.0px;height:183px;background:#d6d6d6"></div>
<div style="position:absolute;right:990.3px;top:231.63px;font-size:10px;line-height:12px;color:#3e3e3e;white-space:pre;transform:scaleX(0.808);transform-origin:right center;">1</div>
<div style="position:absolute;left:44.7px;top:231.63px;font-size:10px;line-height:12px;color:#3e3e3e;white-space:pre;transform:scaleX(0.808);transform-origin:left center;">Тест 2</div>
<div style="position:absolute;right:607.8px;top:231.63px;font-size:10px;line-height:12px;color:#3e3e3e;white-space:pre;transform:scaleX(0.808);transform-origin:right center;">1,000</div>
<div style="position:absolute;right:535px;top:231.63px;font-size:10px;line-height:12px;color:#3e3e3e;white-space:pre;transform:scaleX(0.808);transform-origin:right center;">8 000,00</div>
<div style="position:absolute;right:461.79999999999995px;top:231.63px;font-size:10px;line-height:12px;color:#3e3e3e;white-space:pre;transform:scaleX(0.808);transform-origin:right center;">8 000,00</div>
<div style="position:absolute;left:572.3px;top:231.63px;font-size:10px;line-height:12px;color:#3e3e3e;white-space:pre;transform:scaleX(0.808);transform-origin:left center;">КИТАЙ</div>
<div style="position:absolute;left:719.3px;top:231.63px;font-size:10px;line-height:12px;color:#3e3e3e;white-space:pre;transform:scaleX(0.808);transform-origin:left center;">ГТД:</div>
<div style="position:absolute;left:761.6px;top:231.63px;font-size:10px;line-height:12px;color:#3e3e3e;white-space:pre;transform:scaleX(0.7830895970368478);transform-origin:left center;">10131010/150822/3374940</div>
<div style="position:absolute;right:990.3px;top:249.63px;font-size:10px;line-height:12px;color:#3e3e3e;white-space:pre;transform:scaleX(0.808);transform-origin:right center;">2</div>
<div style="position:absolute;left:44.7px;top:249.63px;font-size:10px;line-height:12px;color:#3e3e3e;white-space:pre;transform:scaleX(0.808);transform-origin:left center;">Тест 2</div>
<div style="position:absolute;right:607.8px;top:249.63px;font-size:10px;line-height:12px;color:#3e3e3e;white-space:pre;transform:scaleX(0.808);transform-origin:right center;">1,000</div>
<div style="position:absolute;right:461.79999999999995px;top:249.63px;font-size:10px;line-height:12px;color:#3e3e3e;white-space:pre;transform:scaleX(0.808);transform-origin:right center;">350,00</div>
<div style="position:absolute;left:572.3px;top:249.63px;font-size:10px;line-height:12px;color:#3e3e3e;white-space:pre;transform:scaleX(0.808);transform-origin:left center;">КИТАЙ</div>
<div style="position:absolute;left:719.3px;top:249.63px;font-size:10px;line-height:12px;color:#3e3e3e;white-space:pre;transform:scaleX(0.808);transform-origin:left center;">ГТД:</div>
<div style="position:absolute;left:761.6px;top:249.63px;font-size:10px;line-height:12px;color:#3e3e3e;white-space:pre;transform:scaleX(0.7830895970368478);transform-origin:left center;">10131010/150822/3374940</div>
<div style="position:absolute;right:990.3px;top:267.63px;font-size:10px;line-height:12px;color:#3e3e3e;white-space:pre;transform:scaleX(0.808);transform-origin:right center;">3</div>
<div style="position:absolute;left:44.7px;top:267.63px;font-size:10px;line-height:12px;color:#3e3e3e;white-space:pre;transform:scaleX(0.808);transform-origin:left center;">Тест 2</div>
<div style="position:absolute;right:607.8px;top:267.63px;font-size:10px;line-height:12px;color:#3e3e3e;white-space:pre;transform:scaleX(0.808);transform-origin:right center;">1,000</div>
<div style="position:absolute;right:535px;top:267.63px;font-size:10px;line-height:12px;color:#3e3e3e;white-space:pre;transform:scaleX(0.808);transform-origin:right center;">350,00</div>
<div style="position:absolute;right:461.79999999999995px;top:267.63px;font-size:10px;line-height:12px;color:#3e3e3e;white-space:pre;transform:scaleX(0.808);transform-origin:right center;">350,00</div>
<div style="position:absolute;left:427px;top:277.3px;width:62px;height:1.0px;background:repeating-linear-gradient(90deg,#f4a0a0 0 2px,transparent 2px 3px)"></div>
<div style="position:absolute;left:572.3px;top:267.63px;font-size:10px;line-height:12px;color:#3e3e3e;white-space:pre;transform:scaleX(0.808);transform-origin:left center;">КИТАЙ</div>
<div style="position:absolute;left:719.3px;top:267.63px;font-size:10px;line-height:12px;color:#3e3e3e;white-space:pre;transform:scaleX(0.808);transform-origin:left center;">ГТД:</div>
<div style="position:absolute;left:761.6px;top:267.63px;font-size:10px;line-height:12px;color:#3e3e3e;white-space:pre;transform:scaleX(0.7830895970368478);transform-origin:left center;">10131010/150822/3374940</div>
<div style="position:absolute;right:990.3px;top:285.63px;font-size:10px;line-height:12px;color:#3e3e3e;white-space:pre;transform:scaleX(0.808);transform-origin:right center;">4</div>
<div style="position:absolute;left:44.7px;top:285.63px;font-size:10px;line-height:12px;color:#3e3e3e;white-space:pre;transform:scaleX(0.808);transform-origin:left center;">Тест 2</div>
<div style="position:absolute;right:607.8px;top:285.63px;font-size:10px;line-height:12px;color:#3e3e3e;white-space:pre;transform:scaleX(0.808);transform-origin:right center;">1,000</div>
<div style="position:absolute;right:535px;top:285.63px;font-size:10px;line-height:12px;color:#3e3e3e;white-space:pre;transform:scaleX(0.808);transform-origin:right center;">350,00</div>
<div style="position:absolute;right:461.79999999999995px;top:285.63px;font-size:10px;line-height:12px;color:#3e3e3e;white-space:pre;transform:scaleX(0.808);transform-origin:right center;">350,00</div>
<div style="position:absolute;left:427px;top:295.3px;width:62px;height:1.0px;background:repeating-linear-gradient(90deg,#f4a0a0 0 2px,transparent 2px 3px)"></div>
<div style="position:absolute;left:572.3px;top:285.63px;font-size:10px;line-height:12px;color:#3e3e3e;white-space:pre;transform:scaleX(0.808);transform-origin:left center;">КИТАЙ</div>
<div style="position:absolute;left:719.3px;top:285.63px;font-size:10px;line-height:12px;color:#3e3e3e;white-space:pre;transform:scaleX(0.808);transform-origin:left center;">ГТД:</div>
<div style="position:absolute;left:761.6px;top:285.63px;font-size:10px;line-height:12px;color:#3e3e3e;white-space:pre;transform:scaleX(0.7830895970368478);transform-origin:left center;">10131010/150822/3374940</div>
<div style="position:absolute;right:990.3px;top:303.63px;font-size:10px;line-height:12px;color:#3e3e3e;white-space:pre;transform:scaleX(0.808);transform-origin:right center;">5</div>
<div style="position:absolute;left:44.7px;top:303.63px;font-size:10px;line-height:12px;color:#3e3e3e;white-space:pre;transform:scaleX(0.808);transform-origin:left center;">Тест 2</div>
<div style="position:absolute;right:607.8px;top:303.63px;font-size:10px;line-height:12px;color:#3e3e3e;white-space:pre;transform:scaleX(0.808);transform-origin:right center;">1,000</div>
<div style="position:absolute;right:535px;top:303.63px;font-size:10px;line-height:12px;color:#3e3e3e;white-space:pre;transform:scaleX(0.808);transform-origin:right center;">350,00</div>
<div style="position:absolute;right:461.79999999999995px;top:303.63px;font-size:10px;line-height:12px;color:#3e3e3e;white-space:pre;transform:scaleX(0.808);transform-origin:right center;">350,00</div>
<div style="position:absolute;left:427px;top:313.3px;width:62px;height:1.0px;background:repeating-linear-gradient(90deg,#f4a0a0 0 2px,transparent 2px 3px)"></div>
<div style="position:absolute;left:572.3px;top:303.63px;font-size:10px;line-height:12px;color:#3e3e3e;white-space:pre;transform:scaleX(0.808);transform-origin:left center;">КИТАЙ</div>
<div style="position:absolute;left:719.3px;top:303.63px;font-size:10px;line-height:12px;color:#3e3e3e;white-space:pre;transform:scaleX(0.808);transform-origin:left center;">ГТД:</div>
<div style="position:absolute;left:761.6px;top:303.63px;font-size:10px;line-height:12px;color:#3e3e3e;white-space:pre;transform:scaleX(0.7830895970368478);transform-origin:left center;">10131010/150822/3374940</div>
<div style="position:absolute;right:990.3px;top:321.63px;font-size:10px;line-height:12px;color:#3e3e3e;white-space:pre;transform:scaleX(0.808);transform-origin:right center;">6</div>
<div style="position:absolute;left:44.7px;top:321.63px;font-size:10px;line-height:12px;color:#3e3e3e;white-space:pre;transform:scaleX(0.808);transform-origin:left center;">Тест 2</div>
<div style="position:absolute;right:607.8px;top:321.63px;font-size:10px;line-height:12px;color:#3e3e3e;white-space:pre;transform:scaleX(0.808);transform-origin:right center;">1,000</div>
<div style="position:absolute;right:535px;top:321.63px;font-size:10px;line-height:12px;color:#3e3e3e;white-space:pre;transform:scaleX(0.808);transform-origin:right center;">350,00</div>
<div style="position:absolute;right:461.79999999999995px;top:321.63px;font-size:10px;line-height:12px;color:#3e3e3e;white-space:pre;transform:scaleX(0.808);transform-origin:right center;">350,00</div>
<div style="position:absolute;left:427px;top:331.3px;width:62px;height:1.0px;background:repeating-linear-gradient(90deg,#f4a0a0 0 2px,transparent 2px 3px)"></div>
<div style="position:absolute;left:572.3px;top:321.63px;font-size:10px;line-height:12px;color:#3e3e3e;white-space:pre;transform:scaleX(0.808);transform-origin:left center;">КИТАЙ</div>
<div style="position:absolute;left:719.3px;top:321.63px;font-size:10px;line-height:12px;color:#3e3e3e;white-space:pre;transform:scaleX(0.808);transform-origin:left center;">ГТД:</div>
<div style="position:absolute;left:761.6px;top:321.63px;font-size:10px;line-height:12px;color:#3e3e3e;white-space:pre;transform:scaleX(0.7830895970368478);transform-origin:left center;">10131010/150822/3374940</div>
<div style="position:absolute;right:990.3px;top:339.63px;font-size:10px;line-height:12px;color:#3e3e3e;white-space:pre;transform:scaleX(0.808);transform-origin:right center;">7</div>
<div style="position:absolute;left:44.7px;top:339.63px;font-size:10px;line-height:12px;color:#3e3e3e;white-space:pre;transform:scaleX(0.808);transform-origin:left center;">Тест 2</div>
<div style="position:absolute;right:607.8px;top:339.63px;font-size:10px;line-height:12px;color:#3e3e3e;white-space:pre;transform:scaleX(0.808);transform-origin:right center;">1,000</div>
<div style="position:absolute;right:535px;top:339.63px;font-size:10px;line-height:12px;color:#3e3e3e;white-space:pre;transform:scaleX(0.808);transform-origin:right center;">350,00</div>
<div style="position:absolute;right:461.79999999999995px;top:339.63px;font-size:10px;line-height:12px;color:#3e3e3e;white-space:pre;transform:scaleX(0.808);transform-origin:right center;">350,00</div>
<div style="position:absolute;left:427px;top:349.3px;width:62px;height:1.0px;background:repeating-linear-gradient(90deg,#f4a0a0 0 2px,transparent 2px 3px)"></div>
<div style="position:absolute;left:572.3px;top:339.63px;font-size:10px;line-height:12px;color:#3e3e3e;white-space:pre;transform:scaleX(0.808);transform-origin:left center;">КИТАЙ</div>
<div style="position:absolute;left:719.3px;top:339.63px;font-size:10px;line-height:12px;color:#3e3e3e;white-space:pre;transform:scaleX(0.808);transform-origin:left center;">ГТД:</div>
<div style="position:absolute;left:761.6px;top:339.63px;font-size:10px;line-height:12px;color:#3e3e3e;white-space:pre;transform:scaleX(0.7830895970368478);transform-origin:left center;">10131010/150822/3374940</div>
<div style="position:absolute;right:990.3px;top:357.63px;font-size:10px;line-height:12px;color:#3e3e3e;white-space:pre;transform:scaleX(0.808);transform-origin:right center;">8</div>
<div style="position:absolute;left:44.7px;top:357.63px;font-size:10px;line-height:12px;color:#3e3e3e;white-space:pre;transform:scaleX(0.808);transform-origin:left center;">Тест 2</div>
<div style="position:absolute;right:607.8px;top:357.63px;font-size:10px;line-height:12px;color:#3e3e3e;white-space:pre;transform:scaleX(0.808);transform-origin:right center;">1,000</div>
<div style="position:absolute;right:535px;top:357.63px;font-size:10px;line-height:12px;color:#3e3e3e;white-space:pre;transform:scaleX(0.808);transform-origin:right center;">350,00</div>
<div style="position:absolute;right:461.79999999999995px;top:357.63px;font-size:10px;line-height:12px;color:#3e3e3e;white-space:pre;transform:scaleX(0.808);transform-origin:right center;">350,00</div>
<div style="position:absolute;left:427px;top:367.3px;width:62px;height:1.0px;background:repeating-linear-gradient(90deg,#f4a0a0 0 2px,transparent 2px 3px)"></div>
<div style="position:absolute;left:572.3px;top:357.63px;font-size:10px;line-height:12px;color:#3e3e3e;white-space:pre;transform:scaleX(0.808);transform-origin:left center;">КИТАЙ</div>
<div style="position:absolute;left:719.3px;top:357.63px;font-size:10px;line-height:12px;color:#3e3e3e;white-space:pre;transform:scaleX(0.808);transform-origin:left center;">ГТД:</div>
<div style="position:absolute;left:761.6px;top:357.63px;font-size:10px;line-height:12px;color:#3e3e3e;white-space:pre;transform:scaleX(0.7830895970368478);transform-origin:left center;">10131010/150822/3374940</div>
<div style="position:absolute;right:990.3px;top:375.63px;font-size:10px;line-height:12px;color:#3e3e3e;white-space:pre;transform:scaleX(0.808);transform-origin:right center;">9</div>
<div style="position:absolute;left:44.7px;top:375.63px;font-size:10px;line-height:12px;color:#3e3e3e;white-space:pre;transform:scaleX(0.808);transform-origin:left center;">Тест 2</div>
<div style="position:absolute;right:607.8px;top:375.63px;font-size:10px;line-height:12px;color:#3e3e3e;white-space:pre;transform:scaleX(0.808);transform-origin:right center;">1,000</div>
<div style="position:absolute;right:535px;top:375.63px;font-size:10px;line-height:12px;color:#3e3e3e;white-space:pre;transform:scaleX(0.808);transform-origin:right center;">350,00</div>
<div style="position:absolute;right:461.79999999999995px;top:375.63px;font-size:10px;line-height:12px;color:#3e3e3e;white-space:pre;transform:scaleX(0.808);transform-origin:right center;">350,00</div>
<div style="position:absolute;left:427px;top:385.3px;width:62px;height:1.0px;background:repeating-linear-gradient(90deg,#f4a0a0 0 2px,transparent 2px 3px)"></div>
<div style="position:absolute;left:572.3px;top:375.63px;font-size:10px;line-height:12px;color:#3e3e3e;white-space:pre;transform:scaleX(0.808);transform-origin:left center;">КИТАЙ</div>
<div style="position:absolute;left:719.3px;top:375.63px;font-size:10px;line-height:12px;color:#3e3e3e;white-space:pre;transform:scaleX(0.808);transform-origin:left center;">ГТД:</div>
<div style="position:absolute;left:761.6px;top:375.63px;font-size:10px;line-height:12px;color:#3e3e3e;white-space:pre;transform:scaleX(0.7830895970368478);transform-origin:left center;">10131010/150822/3374940</div>
<div style="position:absolute;right:990.3px;top:393.63px;font-size:10px;line-height:12px;color:#3e3e3e;white-space:pre;transform:scaleX(0.808);transform-origin:right center;">10</div>
<div style="position:absolute;left:44.7px;top:393.63px;font-size:10px;line-height:12px;color:#3e3e3e;white-space:pre;transform:scaleX(0.808);transform-origin:left center;">Тест 2</div>
<div style="position:absolute;right:607.8px;top:393.63px;font-size:10px;line-height:12px;color:#3e3e3e;white-space:pre;transform:scaleX(0.808);transform-origin:right center;">1,000</div>
<div style="position:absolute;right:535px;top:393.63px;font-size:10px;line-height:12px;color:#3e3e3e;white-space:pre;transform:scaleX(0.808);transform-origin:right center;">350,00</div>
<div style="position:absolute;right:461.79999999999995px;top:393.63px;font-size:10px;line-height:12px;color:#3e3e3e;white-space:pre;transform:scaleX(0.808);transform-origin:right center;">350,00</div>
<div style="position:absolute;left:427px;top:403.3px;width:62px;height:1.0px;background:repeating-linear-gradient(90deg,#f4a0a0 0 2px,transparent 2px 3px)"></div>
<div style="position:absolute;left:572.3px;top:393.63px;font-size:10px;line-height:12px;color:#3e3e3e;white-space:pre;transform:scaleX(0.808);transform-origin:left center;">КИТАЙ</div>
<div style="position:absolute;left:719.3px;top:393.63px;font-size:10px;line-height:12px;color:#3e3e3e;white-space:pre;transform:scaleX(0.808);transform-origin:left center;">ГТД:</div>
<div style="position:absolute;left:761.6px;top:393.63px;font-size:10px;line-height:12px;color:#3e3e3e;white-space:pre;transform:scaleX(0.7830895970368478);transform-origin:left center;">10131010/150822/3374940</div>
<div style="position:absolute;left:421.6px;top:246px;width:73.0px;height:16px;background:#fff"></div>
<div style="position:absolute;left:481.4px;top:246px;width:1.0px;height:16px;background:#d0d0d0"></div>
<div style="position:absolute;left:452.2px;top:249.3px;width:24.100000000000023px;height:10.0px;background:#3b5fc8"></div>
<div style="position:absolute;right:547.7px;top:249.53px;font-size:10px;line-height:12px;color:#fff;white-space:pre;transform:scaleX(0.808);transform-origin:right center;">350,00</div>
<div style="position:absolute;left:427px;top:259px;width:49.30000000000001px;height:1px;background:repeating-linear-gradient(90deg,#f4a0a0 0 2px,transparent 2px 3px)"></div>
<svg style="position:absolute;left:484.4px;top:250.5px" width="7" height="8" viewBox="0 0 7 8"><rect x="0.6" y="0.6" width="5.6" height="6.2" fill="#dedede" stroke="#6c6c6c" stroke-width="1.1"/><rect x="4.1" y="4.5" width="1.5" height="1.5" fill="#6c6c6c"/></svg>
<div style="position:absolute;left:1002.3px;top:222.6px;width:5.0px;height:174.4px;background:#d4d4d4;border-radius:2.5px"></div>
<div style="position:absolute;left:1002.3px;top:222.6px;width:5.0px;height:57.00000000000003px;background:#9a9a9a;border-radius:2.5px"></div>
<svg style="position:absolute;left:1002.5px;top:213.5px" width="5" height="3" viewBox="0 0 5 3"><path d="M0.5 2.5L2.5 0.5L4.5 2.5Z" fill="#c0c0c0"/></svg>
<svg style="position:absolute;left:1002.5px;top:402.5px" width="5" height="3" viewBox="0 0 5 3"><path d="M0.5 0.5H4.5L2.5 2.5Z" fill="#555"/></svg>
<div style="position:absolute;left:6.5px;top:426.8px;width:316.2px;height:14.599999999999966px;background:#fff;border:1px solid #bdbdbd;border-radius:2px;"></div>
<div style="position:absolute;left:309.8px;top:427.8px;width:1.0px;height:12.599999999999966px;background:#cfcfcf"></div>
<div style="position:absolute;left:9px;top:429.13px;font-size:10px;line-height:12px;color:#c0c0c0;white-space:pre;transform:scaleX(0.808);transform-origin:left center;">Комментарий</div>
<div style="position:absolute;left:312.5px;top:429.33px;font-size:8px;line-height:12px;color:#777;white-space:pre;">...</div>
<div style="position:absolute;left:7px;top:452px;width:9px;height:9.300000000000011px;background:#fff;border:1px solid #b8b8b8;border-radius:1px"></div>
<div style="position:absolute;left:19.9px;top:451.74px;font-size:10px;line-height:12px;color:#545454;white-space:pre;transform:scaleX(0.808);transform-origin:left center;">УПД</div>
<div style="position:absolute;left:42.8px;top:451.74px;font-size:10px;line-height:12px;color:#545454;white-space:pre;transform:scaleX(0.808);transform-origin:left center;">Основание:</div>
<div style="position:absolute;left:89.3px;top:451.74px;font-size:10px;line-height:12px;color:#3a60bd;white-space:pre;transform:scaleX(0.808);transform-origin:left center;text-decoration:underline;text-decoration-color:#b4c0e6;text-underline-offset:0.5px">выбрать</div>
<div style="position:absolute;right:227.39999999999998px;top:429.63px;font-size:10px;line-height:12px;color:#545454;white-space:pre;transform:scaleX(0.8364279012938275);transform-origin:right center;">Скидка руч., %:</div>
<div style="position:absolute;left:800.5px;top:426.4px;width:81.10000000000002px;height:15.200000000000045px;background:#fff;border:1px solid #bdbdbd;border-radius:2px;"></div>
<div style="position:absolute;left:868px;top:427.4px;width:1px;height:13.200000000000045px;background:#cfcfcf"></div>
<div style="position:absolute;right:158px;top:429.63px;font-size:10px;line-height:12px;color:#3e3e3e;white-space:pre;transform:scaleX(0.808);transform-origin:right center;">0,00</div>
<svg style="position:absolute;left:871.6px;top:429.8px" width="7" height="8" viewBox="0 0 7 8"><rect x="0.6" y="0.6" width="5.6" height="6.2" fill="#dedede" stroke="#6c6c6c" stroke-width="1.1"/><rect x="4.1" y="4.5" width="1.5" height="1.5" fill="#6c6c6c"/></svg>
<div style="position:absolute;right:230.20000000000005px;top:450.63px;font-size:10px;line-height:12px;color:#545454;white-space:pre;transform:scaleX(0.8243457753186085);transform-origin:right center;">Скидка руч., Σ:</div>
<div style="position:absolute;left:800.5px;top:447.5px;width:81.10000000000002px;height:15.199999999999989px;background:#fff;border:1px solid #bdbdbd;border-radius:2px;"></div>
<div style="position:absolute;left:868px;top:448.5px;width:1px;height:13.199999999999989px;background:#cfcfcf"></div>
<div style="position:absolute;right:158px;top:450.63px;font-size:10px;line-height:12px;color:#3e3e3e;white-space:pre;transform:scaleX(0.808);transform-origin:right center;">0,00</div>
<svg style="position:absolute;left:871.6px;top:450.8px" width="7" height="8" viewBox="0 0 7 8"><rect x="0.6" y="0.6" width="5.6" height="6.2" fill="#dedede" stroke="#6c6c6c" stroke-width="1.1"/><rect x="4.1" y="4.5" width="1.5" height="1.5" fill="#6c6c6c"/></svg>
<div style="position:absolute;left:888.5px;top:423.3px;width:127.60000000000002px;height:42.69999999999999px;background:#dddddd"></div>
<div style="position:absolute;left:891.5px;top:429.63px;font-size:10px;line-height:12px;color:#545454;white-space:pre;transform:scaleX(0.808);transform-origin:left center;">НДС:</div>
<div style="position:absolute;left:919.6px;top:427px;width:79.39999999999998px;height:13.600000000000023px;background:#d7d7d7;border-radius:2px"></div>
<div style="position:absolute;right:26.5px;top:429.63px;font-size:10px;line-height:12px;color:#3e3e3e;white-space:pre;transform:scaleX(0.808);transform-origin:right center;">0,00</div>
<div style="position:absolute;left:891.5px;top:450.63px;font-size:10px;line-height:12px;color:#545454;white-space:pre;transform:scaleX(0.808);transform-origin:left center;">Всего:</div>
<div style="position:absolute;left:919.6px;top:447.8px;width:93.39999999999998px;height:14.399999999999977px;background:#fff;border:1px solid #bdbdbd;border-radius:2px;"></div>
<div style="position:absolute;left:1000.6px;top:448.8px;width:1.0px;height:12.399999999999977px;background:#cfcfcf"></div>
<div style="position:absolute;right:25.5px;top:450.63px;font-size:10px;line-height:12px;color:#3e3e3e;white-space:pre;transform:scaleX(0.808);transform-origin:right center;">17 450,00</div>
<svg style="position:absolute;left:1004.4px;top:450.8px" width="7" height="8" viewBox="0 0 7 8"><rect x="0.6" y="0.6" width="5.6" height="6.2" fill="#dedede" stroke="#6c6c6c" stroke-width="1.1"/><rect x="4.1" y="4.5" width="1.5" height="1.5" fill="#6c6c6c"/></svg>
<div style="position:absolute;left:3px;top:480.2px;width:1018px;height:3.5px;background:#119b3f"></div>
<div style="position:absolute;left:3.6px;top:488.32px;font-size:8.9px;line-height:12px;color:#2a2a2a;white-space:pre;transform:scaleX(0.97);transform-origin:left center;font-weight:bold;">Сообщения:</div>
<svg style="position:absolute;left:1010.5px;top:492.5px" width="6" height="6" viewBox="0 0 6 6"><path d="M0.5 0.5L5.5 5.5M5.5 0.5L0.5 5.5" stroke="#666" stroke-width="0.9"/></svg>
<div style="position:absolute;left:3px;top:507.3px;width:1018px;height:91.30000000000001px;border:1px solid #bdbdbd;background:#fff"></div>
<div style="position:absolute;left:4px;top:508.5px;width:1007.3px;height:16.299999999999955px;background:#fde48e"></div>
<div style="position:absolute;left:10.6px;top:515.8px;width:6.799999999999999px;height:1.5px;background:#29a3dc"></div>
<div style="position:absolute;left:23.8px;top:511.93px;font-size:10px;line-height:12px;color:#3e3e3e;white-space:pre;transform:scaleX(0.7995178762806411);transform-origin:left center;">В строке 2 цена номенклатуры Тест 2 ниже цены с наценкой на вид цен Учетная цена (минимальная цена 8 000)</div>
<div style="position:absolute;left:4px;top:543.3px;width:1007.3px;height:1.0px;background:#e8e8e8"></div>
<div style="position:absolute;left:10.6px;top:533.8px;width:6.799999999999999px;height:1.5px;background:#29a3dc"></div>
<div style="position:absolute;left:23.8px;top:529.94px;font-size:10px;line-height:12px;color:#3e3e3e;white-space:pre;transform:scaleX(0.7995178762806411);transform-origin:left center;">В строке 3 цена номенклатуры Тест 2 ниже цены с наценкой на вид цен Учетная цена (минимальная цена 8 000)</div>
<div style="position:absolute;left:4px;top:561.3px;width:1007.3px;height:1.0px;background:#e8e8e8"></div>
<div style="position:absolute;left:10.6px;top:551.8px;width:6.799999999999999px;height:1.5px;background:#29a3dc"></div>
<div style="position:absolute;left:23.8px;top:547.94px;font-size:10px;line-height:12px;color:#3e3e3e;white-space:pre;transform:scaleX(0.7995178762806411);transform-origin:left center;">В строке 4 цена номенклатуры Тест 2 ниже цены с наценкой на вид цен Учетная цена (минимальная цена 8 000)</div>
<div style="position:absolute;left:4px;top:579.3px;width:1007.3px;height:1.0px;background:#e8e8e8"></div>
<div style="position:absolute;left:10.6px;top:569.8px;width:6.799999999999999px;height:1.5px;background:#29a3dc"></div>
<div style="position:absolute;left:23.8px;top:565.94px;font-size:10px;line-height:12px;color:#3e3e3e;white-space:pre;transform:scaleX(0.7995178762806411);transform-origin:left center;">В строке 5 цена номенклатуры Тест 2 ниже цены с наценкой на вид цен Учетная цена (минимальная цена 8 000)</div>
<div style="position:absolute;left:10.6px;top:587.8px;width:6.799999999999999px;height:1.5px;background:#29a3dc"></div>
<div style="position:absolute;left:23.8px;top:583.94px;font-size:10px;line-height:12px;color:#3e3e3e;white-space:pre;transform:scaleX(0.7995178762806411);transform-origin:left center;">В строке 6 цена номенклатуры Тест 2 ниже цены с наценкой на вид цен Учетная цена (минимальная цена 8 000)</div>
<div style="position:absolute;left:4px;top:525px;width:1007.3px;height:1px;background:#ececec"></div>
<div style="position:absolute;left:1013.8px;top:522.2px;width:4.100000000000023px;height:60.799999999999955px;background:#d4d4d4;border-radius:2px"></div>
<div style="position:absolute;left:1013.8px;top:522.2px;width:4.100000000000023px;height:10.799999999999955px;background:#9a9a9a;border-radius:2px"></div>
<svg style="position:absolute;left:1013.5px;top:513.5px" width="5" height="3" viewBox="0 0 5 3"><path d="M0.5 2.5L2.5 0.5L4.5 2.5Z" fill="#c0c0c0"/></svg>
<svg style="position:absolute;left:1013.5px;top:589.5px" width="5" height="3" viewBox="0 0 5 3"><path d="M0.5 0.5H4.5L2.5 2.5Z" fill="#555"/></svg>
<svg style="position:absolute;left:421px;top:260px" width="240" height="59" viewBox="0 0 240 59"><path d="M12.5 9.5 L12.6 1.2 L21 9.5 H235 a3.5 3.5 0 0 1 3.5 3.5 V53.5 a3.5 3.5 0 0 1 -3.5 3.5 H5 a3.5 3.5 0 0 1 -3.5 -3.5 V13 a3.5 3.5 0 0 1 3.5 -3.5 H12.5 Z" fill="#fcee9f" stroke="#e9a84f" stroke-width="1"/></svg>
<div style="position:absolute;left:428.9px;top:272.63px;font-size:10px;line-height:12px;color:#c8561e;white-space:pre;transform:scaleX(0.808);transform-origin:left center;">Ошибка:</div>
<svg style="position:absolute;left:619.5px;top:274px" width="7" height="7" viewBox="0 0 7 7"><path d="M6.5 0.5V6.5L0.5 3.5Z" fill="#f0c890"/></svg>
<svg style="position:absolute;left:635px;top:274px" width="7" height="7" viewBox="0 0 7 7"><path d="M0.5 0.5V6.5L6.5 3.5Z" fill="#d9843a"/></svg>
<svg style="position:absolute;left:648.5px;top:274px" width="7" height="7" viewBox="0 0 7 7"><path d="M1 1L6 6M6 1L1 6" stroke="#d9843a" stroke-width="1.4"/></svg>
<div style="position:absolute;left:428.9px;top:290.53px;font-size:10px;line-height:12px;color:#2a2a2a;white-space:pre;transform:scaleX(0.7990468537862625);transform-origin:left center;">В строке 2 цена номенклатуры Тест 2 ниже цены с наценкой</div>
<div style="position:absolute;left:428.9px;top:299.83px;font-size:10px;line-height:12px;color:#2a2a2a;white-space:pre;transform:scaleX(0.8001552292865921);transform-origin:left center;">на вид цен Учетная цена (минимальная цена 8 000)</div>
